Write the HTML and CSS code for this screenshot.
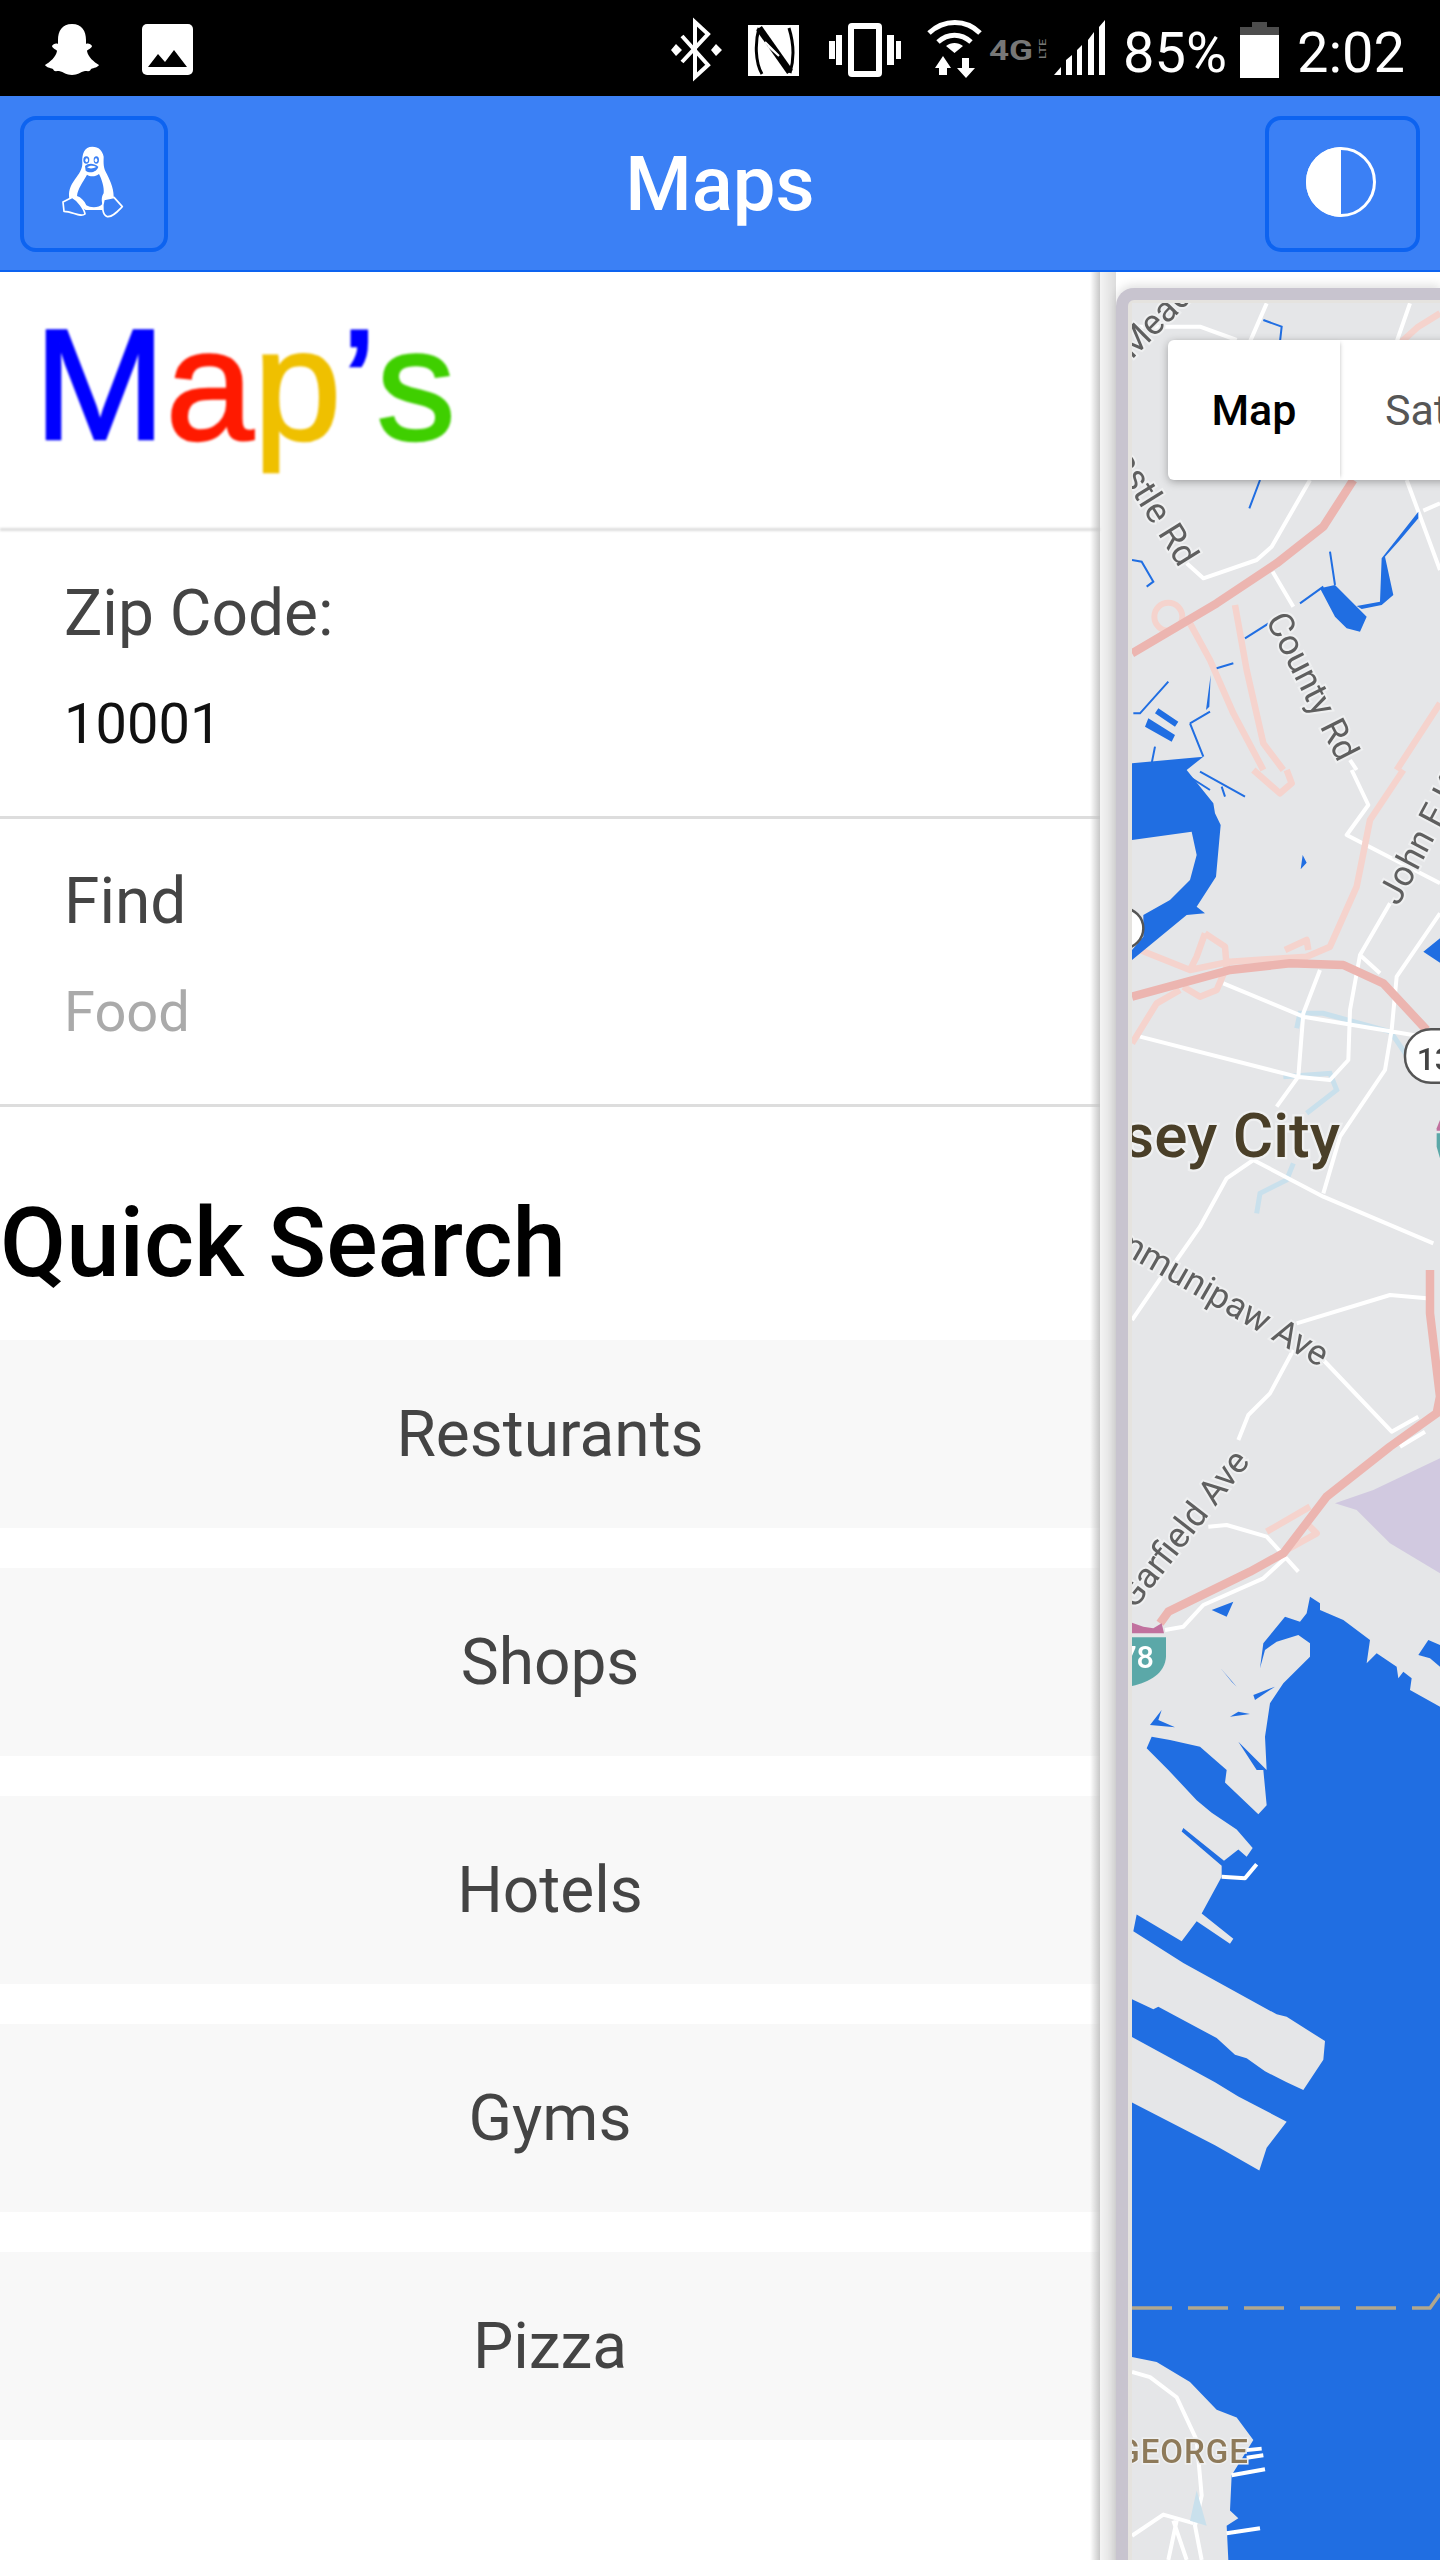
FILE: index.html
```html
<!DOCTYPE html>
<html lang="en">
<head>
<meta charset="utf-8">
<title>Maps</title>
<link rel="stylesheet" href="styles.css">
</head>
<body>
<div class="phone">
  <div class="status">
    <svg class="st ghost" viewBox="0 0 54 96"><path d="M27 24C17 24 13 31 13 40L13 44C11 43 8 44 7 46C7 48 12 50 12 51C11 57 5 62 0 65C1 67 5 68 8 69C9 72 11 71 14 71C19 72 21 75 27 75C33 75 35 72 40 71C43 71 45 72 46 69C49 68 53 67 54 65C49 62 43 57 42 51C42 50 47 48 47 46C46 44 43 43 41 44L41 40C41 31 37 24 27 24Z"/></svg>
    <svg class="st pic" viewBox="0 0 51 96"><rect y="24" width="51" height="51" rx="5"/><path class="cut" d="M6 67L16 54L23 62L32 50L45 67Z"/></svg>
    <svg class="st bt" viewBox="0 0 51 96"><path class="ln" d="M11 36L37 65L24 77V22L37 34L11 62"/><path d="M0 50L5 44L11 50L5 56ZM40 50L45 44L51 50L45 56Z"/></svg>
    <svg class="st nfc" viewBox="0 0 51 96"><rect y="25" width="51" height="51"/><path class="nb" d="M11 28C7 42 7 62 14 74M41 28C46 44 46 60 42 73"/><path class="nb nt" d="M11 28L42 72"/><path class="nw" d="M17 42L31 56L20 46"/></svg>
    <svg class="st vib" viewBox="0 0 72 96"><path fill-rule="evenodd" d="M23 23H49A4 4 0 0 1 53 27V73A4 4 0 0 1 49 77H23A4 4 0 0 1 19 73V27A4 4 0 0 1 23 23ZM25 29V71H47V29Z"/><path d="M0 41H6V59H0ZM58 35H65V65H58ZM7 35H13V65H7ZM67 41H72V59H67Z"/></svg>
    <svg class="st wifi" viewBox="0 0 57 96"><path class="arc" d="M3 33C18 19 40 19 54 33"/><path class="arc" d="M12 42C22 33 35 33 45 42"/><path d="M20 46C25 42 32 42 37 46L28.500 53ZM9 68L17 56L25 68H21V75H13V68ZM31 68H36V58H43V68H49L40 78Z"/></svg>
    <svg class="st fourg" viewBox="0 0 58 96"><text class="g4" x="0" y="60" textLength="44" lengthAdjust="spacingAndGlyphs">4G</text><text class="g4s" transform="translate(57,59) rotate(-90)" textLength="20" lengthAdjust="spacingAndGlyphs">LTE</text></svg>
    <svg class="st sig" viewBox="0 0 52 96"><path d="M0 75L7 67V75ZM12 75V60L18 55V75ZM23 75V50L28 45V75ZM34 75V40L40 32V75ZM45 75V27L51 20V75Z"/></svg>
    <span class="stxt pct">85%</span>
    <svg class="st batt" viewBox="0 0 39 96"><path class="cap" d="M12 22H27V27H39V35H0V27H12Z"/><rect y="35" width="39" height="43"/></svg>
    <span class="stxt clock">2:02</span>
  </div>

  <header class="bar">
    <button class="tbtn tbtn-l" type="button" aria-label="Linux">
      <svg class="tux" viewBox="0 0 270 255">
        <path class="w" d="M130 20C106 20 98 42 100 70C100 88 90 102 78 118C64 138 56 155 62 180L110 210H160L194 170C194 140 180 115 170 95C162 80 164 60 164 50C160 32 150 20 130 20Z"/>
        <path class="b" d="M114 104C125 112 140 110 150 102C158 118 166 140 164 160C160 166 156 176 160 192C150 204 125 204 112 196C106 182 96 172 84 168C86 146 102 126 114 104Z"/>
        <ellipse class="b" cx="112" cy="60" rx="9" ry="11"/><ellipse class="b" cx="142" cy="60" rx="8" ry="11"/>
        <ellipse class="w" cx="113" cy="61" rx="4" ry="6"/><ellipse class="w" cx="141" cy="61" rx="4" ry="6"/>
        <path class="b" d="M108 78C118 70 132 68 148 80C146 92 125 104 110 92Z"/>
        <path class="w" d="M114 82C122 76 132 75 142 81C132 86 122 87 114 82Z"/>
        <path class="foot" d="M42 186L70 172C85 180 105 205 108 222C95 234 70 214 45 214ZM165 178L195 172L220 200C205 215 190 232 175 230C160 225 158 200 165 178Z"/>
      </svg>
    </button>
    <h1 class="title">Maps</h1>
    <button class="tbtn tbtn-r" type="button" aria-label="Theme">
      <svg class="half" viewBox="0 0 70 70"><circle class="ring" cx="35" cy="35" r="33.500"/><path class="w" d="M35 0A35 35 0 0 0 35 70Z"/></svg>
    </button>
  </header>

  <main class="body">
    <section class="side">
      <div class="logo"><span class="c1">M</span><span class="c2">a</span><span class="c3">p</span><span class="c1">’</span><span class="c4">s</span></div>
      <div class="field">
        <div class="label">Zip Code:</div>
        <div class="value">10001</div>
      </div>
      <div class="field">
        <div class="label">Find</div>
        <div class="value ph">Food</div>
      </div>
      <h2 class="qs">Quick Search</h2>
      <div class="qrow">Resturants</div>
      <div class="qrow">Shops</div>
      <div class="qrow">Hotels</div>
      <div class="qrow">Gyms</div>
      <div class="qrow">Pizza</div>
    </section>

    <section class="mapwrap">
      <div class="frame">
        <svg class="map" viewBox="1132 303 308 2257">
          <!-- upper band -->
          <g transform="translate(1090,270) scale(.33333)">
            <path class="lp" d="M1050 130L985 170L935 215M300 1060L360 1170L430 1330L520 1500M435 1005L470 1200L520 1420L580 1500M1050 1300L920 1500"/>
            <circle class="lp2" cx="235" cy="1040" r="42"/>
            <path class="rd" d="M530 100L480 215M960 100L920 215M126 170L240 170L330 170L440 210M660 630L545 830L500 870L340 925L290 880M548 905L610 1010M950 630L1050 900M1000 722L1050 700M780 1470L800 1500"/>
            <path class="hw" d="M126 1150L380 1000L560 880L700 770L790 630"/>
            <path class="wl" d="M520 150L575 170L570 215M510 630L478 715M126 870L155 875L190 935L170 950M465 1105L560 1045M630 1000L700 950M720 845L735 945M380 1195L430 1180M130 1330L150 1330L235 1235M300 1360L360 1325M300 1360L340 1460M195 1430L185 1480"/>
            <path class="wa" d="M690 955L735 945L830 1040L810 1085L770 1075L735 1040ZM875 865L985 725L985 745L930 810L885 860L910 975L875 1005L815 1017L800 1008L870 995ZM205 1315L265 1355L255 1370L195 1330ZM175 1345L255 1395L245 1415L165 1370ZM348 1320L362 1215L358 1310ZM126 1480L340 1460L290 1500H126Z"/>
            <text class="lbl" transform="translate(125,270) rotate(-45)" text-anchor="start">Mead</text>
            <text class="lbl" transform="translate(268,895) rotate(58)" text-anchor="end">Castle Rd</text>
            <text class="lbl" transform="translate(745,1480) rotate(63)" text-anchor="end">County Rd</text>
          </g>
          <!-- middle band -->
          <g transform="translate(1090,770) scale(.33333)">
            <path class="st" d="M620 775L630 730L700 730L900 785M580 920L720 910L740 960L650 1030M610 1180L590 1230L510 1270L500 1330M905 790L1000 930"/>
            <path class="rd" d="M785 0L835 105L770 195L1050 340M1050 430L920 620L905 780L885 900L750 1100L700 1270M900 400L810 555L780 720L775 870L720 930L620 920L150 800M690 600L640 730L625 920L560 1010M400 640L640 740L1000 800M810 555L870 610M490 1170L700 1280L1030 1420M490 1170L410 1225L330 1370L260 1470L240 1500"/>
            <path class="lp" d="M940 0L840 150L800 350L720 530L650 560L420 575L300 600L150 540M345 490L405 530L410 590L380 660L330 680L280 650M345 490L320 560L300 600M585 540L650 510L655 540M270 660L200 700L126 820M490 0L570 70L605 40L590 0"/>
            <path class="hw" d="M126 680L420 600L600 580L760 585L880 640L1010 780"/>
            <path class="wa" d="M126 0H290L370 100L375 130L392 165L378 320L320 410L345 430L290 435L126 570V540L160 500V435L240 390L300 330L320 255L305 185L126 210ZM638 255L650 278L632 298ZM1050 505L1000 545L1050 578Z"/>
            <path class="wl" d="M290 15L360 60M330 5L465 80M395 50L405 80"/>
            <circle class="pin" cx="100" cy="475" r="60"/>
            <rect class="pin" x="945" y="778" width="240" height="160" rx="78"/>
            <text class="shn" x="980" y="900">139</text>
            <path class="teal" d="M1040 1090H1050V1165L1040 1130Z"/>
            <path class="pk" d="M1040 1075L1050 1050V1082H1040Z"/>
            <text class="lbl" transform="translate(925,410) rotate(-62)">John F Kennedy</text>
            <text class="city" x="750" y="1160" text-anchor="end">Jersey City</text>
          </g>
          <!-- lower band -->
          <g transform="translate(1090,1270) scale(.33333)">
            <path class="pur" d="M735 700L850 660L1050 565V910L900 820L800 720Z"/>
            <path class="rd" d="M126 150L215 20M620 160L900 75L1010 85M610 240L540 370L475 435L445 510M700 270L905 485L985 440M930 530L1005 485M355 770L410 765L530 800L625 905M225 1080L280 1070L340 1005L520 925L590 860"/>
            <path class="lp" d="M530 785L660 710M590 840L680 790L650 760"/>
            <path class="hw" d="M210 1060L235 1025L480 905L580 850L710 680L900 530L1040 430L1050 380L1020 130V0"/>
            <path class="wa" d="M660 980L690 1000V1020L760 1050L840 1110L830 1180L860 1150L920 1190L925 1225L940 1205L965 1225L960 1260L1050 1310V1500H530L525 1400L540 1300L580 1240L660 1160V1120L625 1095L560 1115L525 1140L510 1195L520 1120L585 1040L630 1055L650 1030ZM1015 1110L1050 1125V1190L1020 1165L985 1155ZM365 1020L430 995L410 1040ZM392 1195L440 1250L425 1235ZM480 1245L490 1275L555 1250L495 1290ZM420 1340L445 1325L480 1332ZM180 1365L215 1320L205 1350L255 1372ZM185 1400L240 1410L330 1430L410 1500H235L170 1435ZM445 1415L530 1500H500Z"/>
            <path class="pk" d="M126 1058L160 1070L190 1075L215 1060L222 1090H126Z"/>
            <path class="teal" d="M126 1102H228V1160C225 1210 180 1235 126 1248Z"/>
            <text class="ih" x="192" y="1194" text-anchor="end">78</text>
            <text class="lbl" transform="translate(482,575) rotate(-52)" text-anchor="end">Garfield Ave</text>
            <text class="lbl" transform="translate(690,292) rotate(30)" text-anchor="end">Communipaw Ave</text>
          </g>
          <!-- harbour -->
          <rect class="wa" x="1132" y="1770" width="308" height="790"/>
          <g transform="translate(1090,1770) scale(.33333,.50380)">
            <path class="land" d="M126 0H235L320 60L365 85L440 118L488 155L470 172L445 158L402 180L280 115L275 122L395 190V212L335 285L430 335L420 345L320 300L275 340L140 287L130 320L280 383L560 485L590 490L705 538L700 575L640 635L590 620L525 598L470 572L435 565L380 532L205 470L190 475L126 455ZM410 0H520L530 70L505 88L405 25ZM126 530L375 620L445 648L590 698L530 750L508 795L375 745L126 660ZM126 1165L200 1175L300 1215L380 1270L440 1285L490 1330L425 1400L420 1470L445 1485L410 1500L415 1568H126Z"/>
            <path class="rdn" d="M395 212L465 215L500 187M126 1195L180 1205L260 1245L320 1330L335 1440L315 1500L335 1568M126 1520L220 1478L310 1495M260 1490L235 1568M250 1490L290 1568M470 1350L515 1347M470 1365L520 1360M425 1400L525 1388M410 1515L510 1505"/>
            <path class="st2" d="M300 1490L320 1430L350 1500Z"/>
            <path class="dash" d="M126 1068L1020 1068L1050 1040"/>
          </g>
          <text class="town" x="1249" y="2463" text-anchor="end">ST. GEORGE</text>
        </svg>
        <div class="mtype">
          <div class="mtab mtab-on">Map</div>
          <div class="mtab">Satellite</div>
        </div>
      </div>
    </section>
  </main>
</div>
</body>
</html>
```
FILE: styles.css
```css
* { box-sizing: border-box; }
html, body { margin: 0; padding: 0; background: #fff; }
body { font-family: Roboto, "Noto Sans", sans-serif; }
.phone { width: 1440px; height: 2560px; overflow: hidden; display: flex; flex-direction: column; }

/* status bar */
.status { height: 96px; flex: none; background: #000; color: #fff; display: flex; padding-left: 45px; }
.st { height: 96px; flex: none; fill: #fff; }
.ghost { width: 54px; }
.pic { width: 51px; margin-left: 43px; }
.pic .cut { fill: #000; }
.bt { width: 51px; margin-left: 478px; }
.bt .ln { fill: none; stroke: #fff; stroke-width: 4; }
.nfc { width: 51px; margin-left: 26px; }
.nb { fill: none; stroke: #000; stroke-width: 3; }
.nt { stroke-width: 7; }
.nw { fill: none; stroke: #fff; stroke-width: 2; }
.vib { width: 72px; margin-left: 30px; }
.wifi { width: 57px; margin-left: 25px; }
.wifi .arc { fill: none; stroke: #fff; stroke-width: 5; }
.fourg { width: 58px; margin-left: 6px; }
.g4 { font-family: Roboto, sans-serif; font-size: 28px; font-weight: 700; fill: #777; }
.g4s { font-family: Roboto, sans-serif; font-size: 9px; font-weight: 500; fill: #777; }
.sig { width: 52px; margin-left: 7px; }
.stxt { font-size: 56px; line-height: 86px; padding-top: 10px; flex: none; }
.pct { margin-left: 17px; }
.batt { width: 39px; margin-left: 13px; }
.batt .cap { fill: #4d4d4d; }
.clock { margin-left: 18px; }

/* top bar */
.bar { height: 176px; flex: none; background: #3b80f5; border-bottom: 2px solid #0d63f0; display: flex; align-items: flex-start; justify-content: space-between; padding: 20px 20px 0 20px; }
.tbtn { height: 136px; padding: 0; background: transparent; border: 4px solid #0d63f0; border-radius: 16px; display: flex; align-items: center; justify-content: center; }
.tbtn-l { width: 148px; }
.tbtn-r { width: 155px; }
.tux { width: 90px; height: 85px; margin-top: -4px; }
.tux .w { fill: #fff; }
.tux .b { fill: #3b80f5; }
.tux .foot { fill: #3b80f5; stroke: #fff; stroke-width: 5; stroke-linejoin: round; }
.half { width: 70px; height: 70px; margin: -4px 2px 0 0; }
.half .ring { fill: none; stroke: #fff; stroke-width: 3; }
.half .w { fill: #fff; }
.title { margin: 0 0 0 7px; font-size: 76px; font-weight: 500; line-height: 136px; color: #fff; }

/* layout */
.body { flex: 1; display: flex; min-height: 0; }
.side { width: 1100px; flex: none; position: relative; }
.side::after { content: ""; position: absolute; top: 0; bottom: 0; right: 0; width: 10px; background: linear-gradient(to right, rgba(190,190,190,0), rgba(190,190,190,.85)); }

.logo { height: 259px; padding: 33px 0 0 34px; border-bottom: 3px solid #ddd; font-family: "Liberation Sans", Arial, sans-serif; font-size: 158px; line-height: 158px; -webkit-text-stroke: 2.500px; filter: blur(.8px); }
.logo span { display: inline-block; }
.c1 { color: #00f; }
.c2 { color: #ff1a00; }
.c3 { color: #efc000; }
.c4 { color: #3fcf00; }

.field { height: 288px; padding: 38px 64px 0; border-bottom: 3px solid #ddd; }
.label { font-size: 64px; line-height: 90px; color: #444; }
.value { font-size: 56px; line-height: 80px; margin-top: 25px; color: #111; }
.value.ph { color: #aaa; }

.qs { margin: 76px 0 37px; font-size: 96px; font-weight: 500; line-height: 120px; color: #000; }
.qrow { height: 188px; margin-bottom: 40px; background: #f8f8f8; color: #444; font-size: 64px; display: flex; align-items: center; justify-content: center; }

/* map */
.mapwrap { flex: 1; min-width: 0; overflow: hidden; background: linear-gradient(to right, #f4f4f4, #dcdcdc 16px, #fff 16px); }
.frame { position: relative; margin: 16px 0 0 16px; width: 324px; height: 2400px; border-top: 12px solid #c8c4cf; border-left: 12px solid #c8c4cf; border-top-left-radius: 18px; background: #e5e3df; padding: 3px 0 0 4px; box-shadow: 0 -3px 10px rgba(0,0,0,.12); }
.map { display: block; width: 308px; height: 2257px; background: #e5e6e8; filter: blur(.5px); }
.map path, .map circle, .map rect { vector-effect: non-scaling-stroke; }
.rd, .rdn { fill: none; stroke: #fff; stroke-width: 4; stroke-linejoin: round; }
.hw { fill: none; stroke: #ecb5b0; stroke-width: 8.500; stroke-linejoin: round; }
.lp { fill: none; stroke: #f5d3cd; stroke-width: 6.500; stroke-linejoin: round; }
.lp2 { fill: none; stroke: #f5d3cd; stroke-width: 6; }
.wl { fill: none; stroke: #206ee2; stroke-width: 2; }
.wa { fill: #206ee2; }
.map .st { fill: none; stroke: #c9e0ec; stroke-width: 5; height: auto; }
.st2 { fill: #c9e0ec; }
.land { fill: #e5e6e8; }
.pur { fill: #d1c9e0; }
.pin { fill: #fff; stroke: #555; stroke-width: 2.500; }
.pk { fill: #c1719e; }
.teal { fill: #5ba8a8; }
.ih { font-family: Roboto, sans-serif; font-size: 92px; font-weight: 500; fill: #fff; }
.shn { font-family: Roboto, sans-serif; font-size: 96px; font-weight: 500; fill: #444; }
.lbl { font-family: Roboto, sans-serif; font-size: 106px; fill: #5f5f5f; stroke: #eff0f1; stroke-width: 12; paint-order: stroke; }
.city { font-family: Roboto, sans-serif; font-size: 186px; font-weight: 500; fill: #4a3f28; stroke: #eff0f1; stroke-width: 14; paint-order: stroke; }
.town { font-family: Roboto, sans-serif; font-size: 33px; font-weight: 500; letter-spacing: 1px; fill: #8e7a5a; stroke: #eff0f1; stroke-width: 3; paint-order: stroke; }
.dash { fill: none; stroke: #b0a78e; stroke-width: 3.500; stroke-dasharray: 40 16; }

.mtype { position: absolute; left: 40px; top: 40px; height: 140px; display: flex; background: #fff; border-radius: 6px 0 0 6px; box-shadow: 0 2px 8px rgba(0,0,0,.3); }
.mtab { height: 140px; padding: 0 45px; display: flex; align-items: center; font-size: 43px; color: #565656; white-space: nowrap; }
.mtab-on { width: 172px; padding: 0; justify-content: center; color: #000; font-weight: 500; box-shadow: 3px 0 4px -3px rgba(0,0,0,.25); }
```
